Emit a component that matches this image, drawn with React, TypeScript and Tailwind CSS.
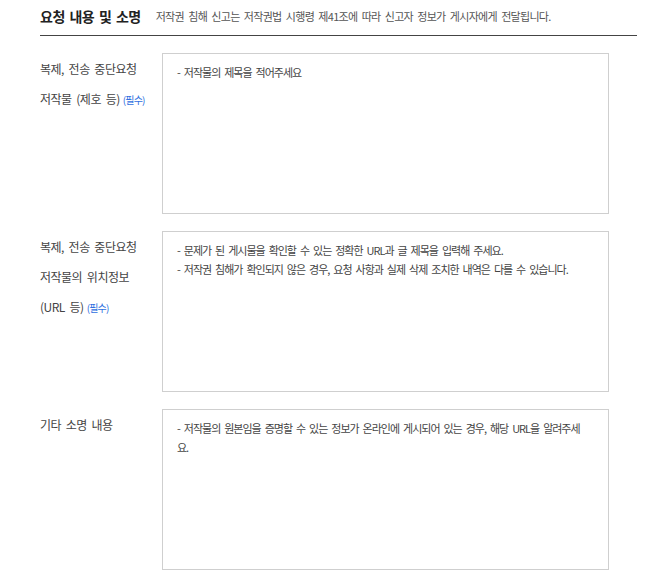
import React from 'react';

const font = "font-['Noto_Sans_CJK_KR',sans-serif]";

const Required: React.FC = () => (
  <span className="ml-[3px] text-[10px] tracking-[-0.8px] text-[#2f6fe0]">(필수)</span>
);

type Field = {
  label: React.ReactNode;
  placeholder: string;
};

const fields: Field[] = [
  {
    label: (
      <>
        복제, 전송 중단요청
        <br />
        저작물 (제호 등)
        <Required />
      </>
    ),
    placeholder: '- 저작물의 제목을 적어주세요',
  },
  {
    label: (
      <>
        복제, 전송 중단요청
        <br />
        저작물의 위치정보
        <br />
        (URL 등)
        <Required />
      </>
    ),
    placeholder:
      '- 문제가 된 게시물을 확인할 수 있는 정확한 URL과 글 제목을 입력해 주세요.\n- 저작권 침해가 확인되지 않은 경우, 요청 사항과 실제 삭제 조치한 내역은 다를 수 있습니다.',
  },
  {
    label: <>기타 소명 내용</>,
    placeholder:
      '- 저작물의 원본임을 증명할 수 있는 정보가 온라인에 게시되어 있는 경우, 해당 URL을 알려주세\n요.',
  },
];

const App: React.FC = () => {
  return (
    <div className={`${font} min-h-screen bg-white pl-[40px] pr-[8px]`}>
      {/* Header */}
      <div className="flex items-center gap-[15px] border-b border-[#444] pt-[6px] pb-[8px]">
        <h2 className="text-[14px] font-bold tracking-[-0.5px] [word-spacing:2px] text-[#222]">
          요청 내용 및 소명
        </h2>
        <p className="text-[11px] tracking-[-0.7px] [word-spacing:2.5px] text-[#555]">
          저작권 침해 신고는 저작권법 시행령 제41조에 따라 신고자 정보가 게시자에게 전달됩니다.
        </p>
      </div>

      {/* Fields */}
      <div className="pt-[17px]">
        {fields.map((f, i) => (
          <div key={i} className="mb-[17px] flex">
            <div className="mt-[1px] w-[122px] shrink-0 text-[12px] leading-[30px] tracking-[-0.5px] [word-spacing:2.5px] text-[#444]">
              {f.label}
            </div>
            <textarea
              placeholder={f.placeholder}
              className="h-[161px] w-[447px] resize-none border border-[#cfcfcf] pt-[9px] pr-[10px] pl-[14px] text-[11px] leading-[19px] tracking-[-1px] [word-spacing:2.5px] text-[#444] outline-none placeholder:text-[#444]"
            />
          </div>
        ))}
      </div>
    </div>
  );
};

export default App;
